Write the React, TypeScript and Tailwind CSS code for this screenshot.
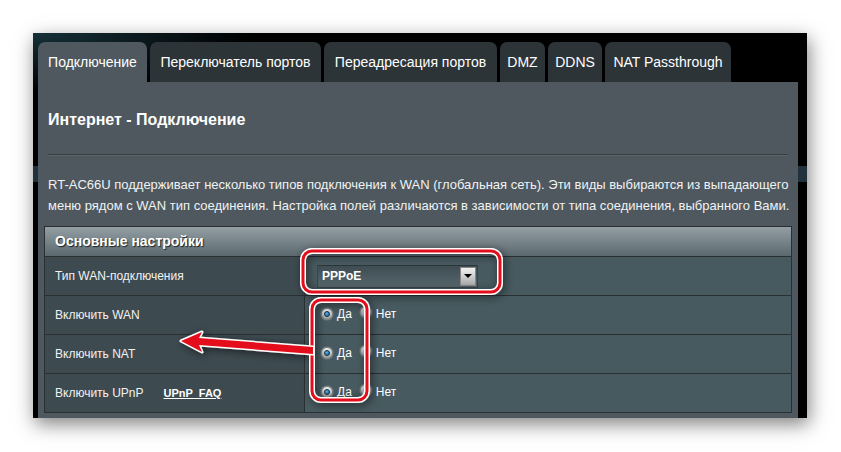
const font = { fontFamily: '"Liberation Sans", Arial, sans-serif' };

const tabs = [
  { name: "Подключение", w: "w-[109px]", active: true },
  { name: "Переключатель портов", w: "w-[171px]" },
  { name: "Переадресация портов", w: "w-[173px]" },
  { name: "DMZ", w: "w-[45px]" },
  { name: "DDNS", w: "w-[54px]" },
  { name: "NAT Passthrough", w: "w-[126px]" },
];

function Radio({ checked }: { checked?: boolean }) {
  return (
    <span className="inline-flex w-[12px] h-[12px] rounded-full items-center justify-center bg-[linear-gradient(#f4f4f4,#9a9a9a)] border border-[#7d8587] shadow-[0_0_1px_#fff]">
      {checked && (
        <span className="w-[6px] h-[6px] rounded-full bg-[radial-gradient(circle_at_40%_35%,#5fb3e8,#0e5a8c)] border border-[#0b2f47]" />
      )}
    </span>
  );
}

function YesNo() {
  return (
    <div className="flex items-center -mt-[3px] text-[12px] text-white">
      <Radio checked />
      <span className="ml-[4px]">Да</span>
      <span className="ml-[8px]">
        <Radio />
      </span>
      <span className="ml-[4px]">Нет</span>
    </div>
  );
}

function Row({ label, children, extra }: { label: string; children: React.ReactNode; extra?: React.ReactNode }) {
  return (
    <div className="flex h-[39px] border-t border-[#2a2f31]">
      <div className="w-[260px] flex items-center pl-[10px] bg-[#3d4a50] border-r border-[#2a2f31] text-[12px] text-[#f2f2f2]">
        {label}
        {extra}
      </div>
      <div className="flex-1 flex items-center bg-[#475a5f] pl-[12px]">{children}</div>
    </div>
  );
}

export default function App() {
  return (
    <div className="w-[841px] h-[452px] bg-white pt-[33px] pl-[33px] relative" style={font}>
      <div className="w-[774px] h-[385px] flex flex-col pl-[5px] pr-[9px] pt-[9px] shadow-[2px_6px_18px_rgba(0,0,0,0.5)] bg-[radial-gradient(ellipse_220px_60px_at_0%_0%,#16313a,transparent),linear-gradient(#000_133px,#22323c_133px,#22323c_149px,#000_149px)]">
        <div className="flex gap-[3px] h-[40px]">
          {tabs.map((t) => (
            <div
              key={t.name}
              className={`${t.w} h-full rounded-t-[7px] flex items-center justify-center text-[14px] text-white ${
                t.active ? "bg-[#4e585e]" : "bg-[#2c3438]"
              }`}
            >
              {t.name}
            </div>
          ))}
        </div>
        <div className="flex-1 bg-[#4e585e] px-[6px]">
          <div className="px-[4px]">
            <h1 className="pt-[29px] text-[16px] leading-[18px] font-bold text-white">Интернет - Подключение</h1>
            <div className="mt-[25px] h-[2px] bg-[#383f43] border-b border-[#5a6469]" />
            <p className="mt-[18px] text-[13px] leading-[21px] text-[#f0f2f3] whitespace-nowrap">
              RT-AC66U поддерживает несколько типов подключения к WAN (глобальная сеть). Эти виды выбираются из выпадающего
              <br />
              меню рядом с WAN тип соединения. Настройка полей различаются в зависимости от типа соединения, выбранного Вами.
            </p>
          </div>
          <div className="mt-[10px] border border-[#2a2f31] border-t-0">
            <div className="h-[30px] border-t border-[#2a2f31] bg-[linear-gradient(#939fa4,#5b686e)] flex items-center pl-[10px] text-[14px] font-bold text-white [text-shadow:1px_1px_1px_#1c2326]">
              Основные настройки
            </div>
            <Row label="Тип WAN-подключения">
              <div className="w-[161px] h-[23px] flex items-center justify-between bg-[linear-gradient(#3f4d53,#55666c)] border border-[#39454a] border-t-[#2c3539] pl-[4px] pr-[1px]">
                <span className="text-[12px] font-bold text-white">PPPoE</span>
                <span className="w-[16px] h-[19px] flex items-center justify-center bg-[linear-gradient(#f2f2f2,#a9a9a9)] border border-[#888]">
                  <span className="w-0 h-0 border-l-[4px] border-r-[4px] border-t-[4px] border-l-transparent border-r-transparent border-t-black" />
                </span>
              </div>
            </Row>
            <Row label="Включить WAN">
              <div className="pl-[4px]">
                <YesNo />
              </div>
            </Row>
            <Row label="Включить NAT">
              <div className="pl-[4px]">
                <YesNo />
              </div>
            </Row>
            <Row
              label="Включить UPnP"
              extra={
                <span className="ml-[20px] text-[11px] font-bold underline text-white whitespace-pre">UPnP  FAQ</span>
              }
            >
              <div className="pl-[4px]">
                <YesNo />
              </div>
            </Row>
          </div>
        </div>
      </div>

      <svg className="absolute inset-0 pointer-events-none" width="841" height="452" viewBox="0 0 841 452">
        <defs>
          <filter id="sh" x="-30%" y="-30%" width="160%" height="160%">
            <feDropShadow dx="2" dy="2" stdDeviation="4" floodColor="#000" floodOpacity="0.55" />
          </filter>
        </defs>
        <g filter="url(#sh)">
          <rect x="303" y="251" width="197" height="41" rx="9" fill="none" stroke="#fff" strokeWidth="6" />
          <rect x="303" y="251" width="197" height="41" rx="9" fill="none" stroke="#e3101a" strokeWidth="3" />
          <rect x="312" y="300" width="55" height="100" rx="9" fill="none" stroke="#fff" strokeWidth="6" />
          <rect x="312" y="300" width="55" height="100" rx="9" fill="none" stroke="#e3101a" strokeWidth="3" />
          <polygon
            points="181,341 202,332 199,338 313,347 313,354 199,345 202,352"
            fill="#e3101a"
            stroke="#fff"
            strokeWidth="3"
            strokeLinejoin="round"
            paintOrder="stroke"
          />
        </g>
      </svg>
    </div>
  );
}
